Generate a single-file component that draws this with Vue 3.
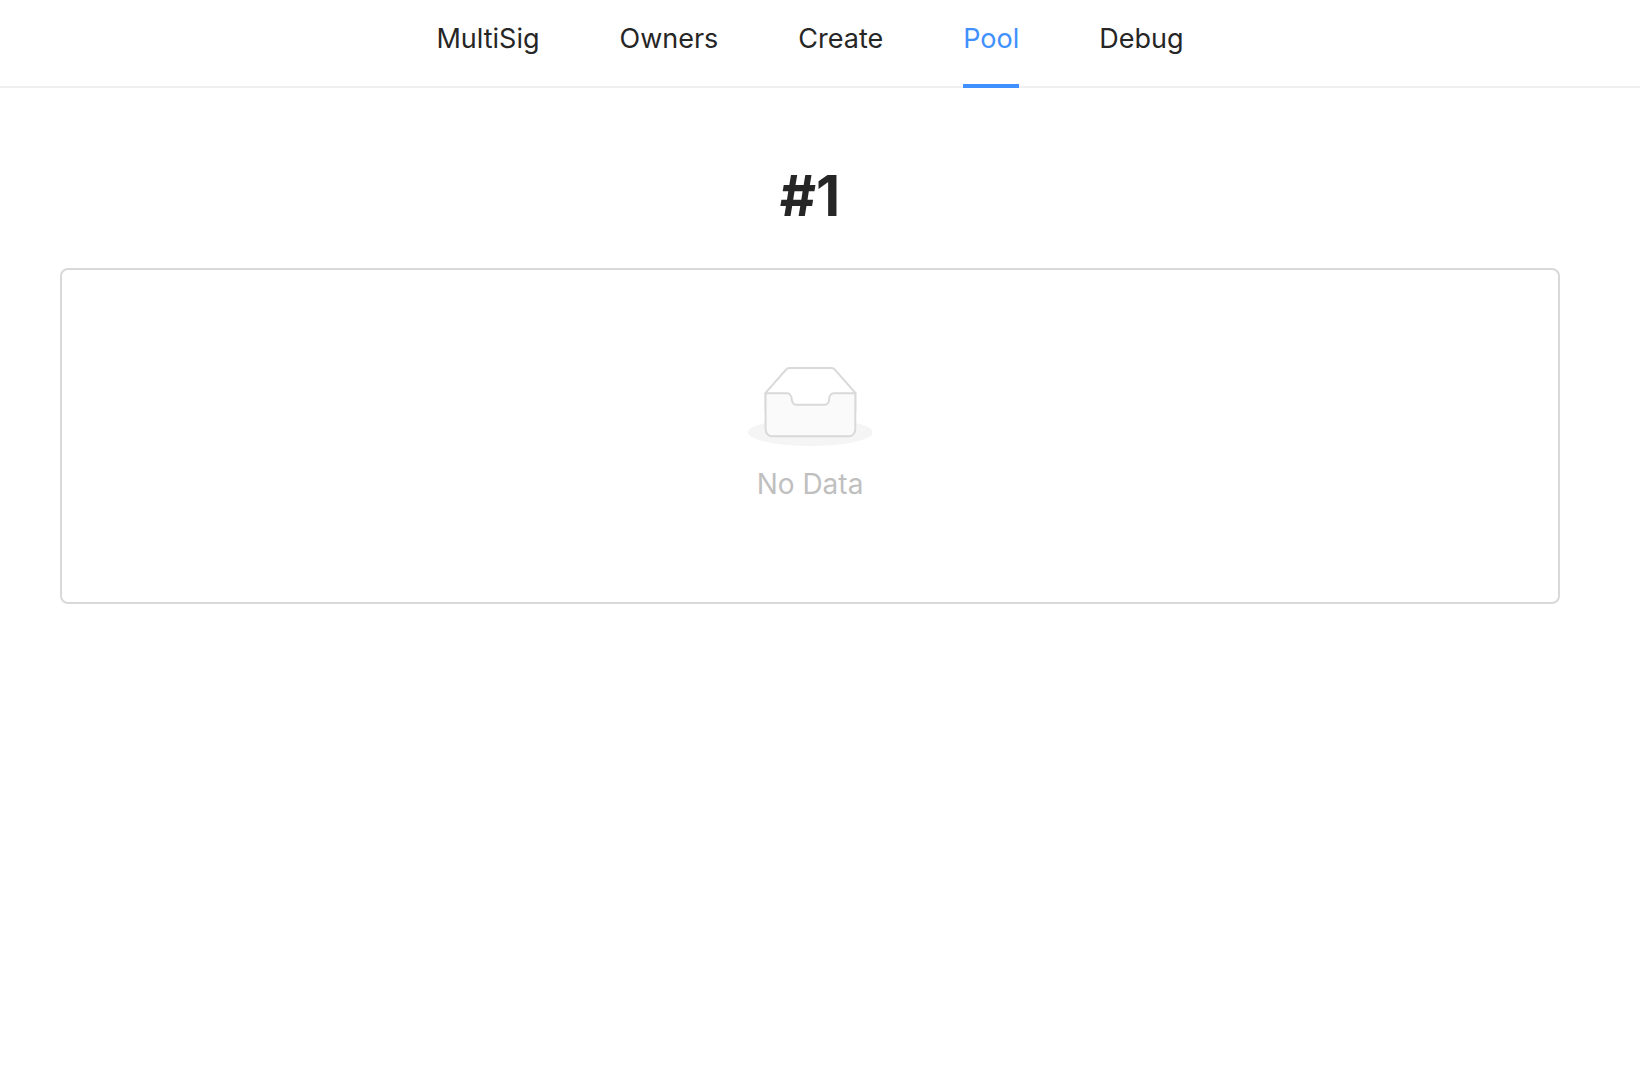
<script setup>
import { ref } from 'vue'

const tabs = ['MultiSig', 'Owners', 'Create', 'Pool', 'Debug']
const active = ref('Pool')
</script>

<template>
  <div class="page">
    <nav class="tabs">
      <a
        v-for="tab in tabs"
        :key="tab"
        href="#"
        class="tab"
        :class="{ active: tab === active }"
        @click.prevent="active = tab"
      >{{ tab }}</a>
    </nav>
    <main class="content">
      <h1 class="title">#1</h1>
      <section class="list">
        <svg class="empty-image" viewBox="0 0 64 41" aria-hidden="true">
          <g transform="translate(0 1)" fill="none" fill-rule="evenodd">
            <ellipse fill="#f5f5f5" cx="32" cy="33" rx="32" ry="7" />
            <g fill-rule="nonzero" stroke="#d9d9d9">
              <path d="M55 12.76L44.854 1.258C44.367.474 43.656 0 42.907 0H21.093c-.749 0-1.46.474-1.947 1.257L9 12.761V22h46v-9.24z" />
              <path d="M41.613 15.931c0-1.605.994-2.93 2.227-2.931H55v18.137C55 33.26 53.68 35 52.05 35h-40.1C10.32 35 9 33.259 9 31.137V13h11.16c1.233 0 2.227 1.323 2.227 2.928v.022c0 1.605 1.005 2.901 2.237 2.901h14.752c1.232 0 2.237-1.308 2.237-2.913v-.007z" fill="#fafafa" />
            </g>
          </g>
        </svg>
        <p class="empty-text">No Data</p>
      </section>
    </main>
  </div>
</template>

<style>
body {
  margin: 0;
  background: #fff;
}
</style>

<style scoped>
.page {
  font-family: Inter, "Liberation Sans", sans-serif;
  font-size: 27px;
  line-height: 44px;
  color: #262626;
}

.tabs {
  display: flex;
  justify-content: center;
  gap: 80px;
  padding-top: 17px;
  padding-right: 20px;
  box-shadow: inset 0 -2px #f0f0f0;
}

.tab {
  padding-bottom: 23px;
  border-bottom: 4px solid transparent;
  color: inherit;
  text-decoration: none;
}

.tab.active {
  color: #4190ff;
  border-bottom-color: #4190ff;
}

.content {
  padding: 72px 80px 0 60px;
}

.title {
  margin: 0 0 36px;
  font-size: 56px;
  line-height: 72px;
  font-weight: 700;
  font-kerning: none;
  text-align: center;
}

.list {
  display: flex;
  flex-direction: column;
  align-items: center;
  padding: 96px 32px;
  border: 2px solid #d9d9d9;
  border-radius: 8px;
}

.empty-image {
  display: block;
  height: 80px;
}

.empty-text {
  margin: 16px 0 0;
  font-size: 28px;
  color: #bfbfbf;
}
</style>
